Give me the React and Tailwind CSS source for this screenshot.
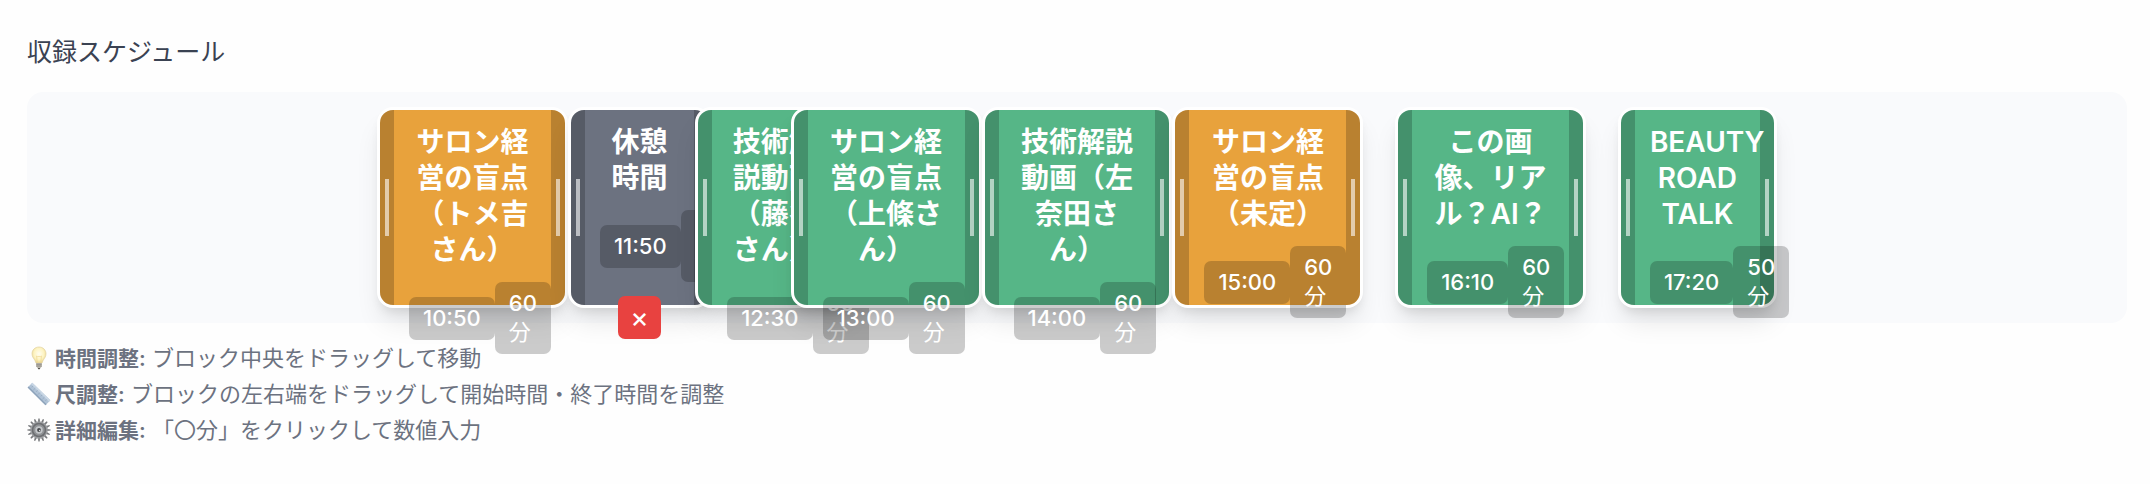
const DAY_START = 9 * 60;
const DAY_LENGTH = 11 * 60;

const blocks = [
  { title: "サロン経営の盲点（トメ吉さん）", time: "10:50", minutes: 60, color: "bg-[#e8a23c]" },
  { title: "休憩時間", time: "11:50", minutes: 45, color: "bg-[#6c7280]", removable: true },
  { title: "技術解説動画（藤谷さん）", time: "12:30", minutes: 50, color: "bg-[#56b687]" },
  { title: "サロン経営の盲点（上條さん）", time: "13:00", minutes: 60, color: "bg-[#56b687]" },
  { title: "技術解説動画（左奈田さん）", time: "14:00", minutes: 60, color: "bg-[#56b687]" },
  { title: "サロン経営の盲点（未定）", time: "15:00", minutes: 60, color: "bg-[#e8a23c]" },
  { title: "この画像、リアル？AI？", time: "16:10", minutes: 60, color: "bg-[#56b687]" },
  { title: "BEAUTY ROAD TALK", time: "17:20", minutes: 50, color: "bg-[#56b687]" },
];

function percent(minutes) {
  return `${(minutes / DAY_LENGTH) * 100}%`;
}

function startOffset(time) {
  const [h, m] = time.split(":").map(Number);
  return percent(h * 60 + m - DAY_START);
}

function Handle({ side }) {
  return (
    <span
      className={
        "absolute inset-y-0 flex w-3.5 cursor-ew-resize items-center justify-center bg-black/20 " +
        (side === "left" ? "left-0 rounded-l-[13px]" : "right-0 rounded-r-[13px]")
      }
    >
      <span className="h-[57px] w-1 bg-white/60" />
    </span>
  );
}

function Block({ block }) {
  return (
    <article
      className={
        "absolute inset-y-[15px] rounded-2xl border-3 border-white shadow-[0_18px_27px_-5px_rgba(0,0,0,0.1),0_7px_11px_-4px_rgba(0,0,0,0.1)] " +
        block.color
      }
      style={{ left: startOffset(block.time), width: percent(block.minutes) }}
    >
      <Handle side="left" />
      <Handle side="right" />
      <div className="relative flex flex-col gap-3.5 px-[29px] pt-3.5 text-white">
        <h3 className="text-center text-[28px] leading-9 font-semibold [text-spacing-trim:space-all]">{block.title}</h3>
        <div className="flex items-center text-[22px] leading-[29px] font-medium">
          <button type="button" className="shrink-0 rounded-[7px] bg-black/20 px-3.5 py-[7px]">
            {block.time}
          </button>
          <button type="button" className="w-14 shrink-0 rounded-[7px] bg-black/20 px-3.5 py-[7px] text-left">
            {block.minutes}
            <span className="font-normal">分</span>
          </button>
        </div>
        {block.removable && (
          <button
            type="button"
            aria-label="削除"
            className="flex size-[43px] items-center justify-center self-center rounded-[7px] bg-[#e84240] text-[28px] leading-[29px] font-normal"
          >
            ×
          </button>
        )}
      </div>
    </article>
  );
}

function BulbIcon() {
  return (
    <svg viewBox="0 0 24 24" className="size-6 shrink-0" aria-hidden="true">
      <defs>
        <radialGradient id="bulb" cx="50%" cy="42%" r="60%">
          <stop offset="0" stopColor="#fffdf0" />
          <stop offset="0.6" stopColor="#fdf3c0" />
          <stop offset="1" stopColor="#e6d08a" />
        </radialGradient>
      </defs>
      <path d="M12 1C7.9 1 5 4 5 7.800c0 3 1.700 4.600 2.800 6.400.7 1.200.8 2.300 1.400 3h5.600c.6-.7.7-1.800 1.400-3C17.300 12.400 19 10.800 19 7.800 19 4 16.100 1 12 1z" fill="url(#bulb)" stroke="#e3d3a0" strokeWidth=".7" />
      <path d="M10.300 16.500 9.500 10l1.500 1 1-1 1 1 1.500-1-.8 6.500" fill="none" stroke="#ecd48a" strokeWidth=".6" />
      <path d="M9.200 17h5.600v3.500l-1.300 1.500h-3l-1.300-1.500z" fill="#b9b6ad" />
      <path d="M9.200 18.300h5.600M9.200 20h5.600" stroke="#87837b" strokeWidth=".7" />
      <path d="M10.700 22h2.600l-.6 1.200h-1.400z" fill="#55514b" />
    </svg>
  );
}

function RulerIcon() {
  return (
    <svg viewBox="0 0 24 24" className="size-6 shrink-0" aria-hidden="true">
      <path d="M5.300.8 23.400 18.300 18.500 23.300.6 5.400z" fill="#afc2d6" />
      <path d="M5.300.8 23.400 18.300 22 19.700 4 2.100z" fill="#c9d7e5" />
      <path d="M.6 5.400 18.500 23.300l1-1L1.600 4.400z" fill="#8ea3ba" />
      <path d="m6 3.900-1.400 1.400M8.300 6.100 6.200 8.200M10.600 8.400 9.200 9.800M12.900 10.600l-2.100 2.100M15.200 12.900l-1.400 1.400M17.500 15.100l-2.100 2.100M19.800 17.400l-1.400 1.400" stroke="#8c9fb5" strokeWidth=".6" />
    </svg>
  );
}

const teeth = Array.from({ length: 16 }, (_, i) => i * 22.5);

function GearIcon() {
  return (
    <svg viewBox="0 0 24 24" className="size-6 shrink-0" aria-hidden="true">
      {teeth.map((angle) => (
        <path key={angle} d="M10.900 4 11.400.4h1.200L13.100 4z" fill="#77797c" transform={`rotate(${angle} 12 12)`} />
      ))}
      <circle cx="12" cy="12" r="8.800" fill="#9b9da0" />
      <circle cx="12" cy="12" r="7.300" fill="#6c6e71" />
      <circle cx="12" cy="12" r="5.700" fill="#909396" />
      <circle cx="12" cy="12" r="3.700" fill="#c4c7ca" />
      <circle cx="12" cy="12" r="1.900" fill="#45474a" />
      <circle cx="12.600" cy="12.500" r=".7" fill="#d9dbdd" />
    </svg>
  );
}

const hints = [
  { Icon: BulbIcon, label: "時間調整:", text: "ブロック中央をドラッグして移動" },
  { Icon: RulerIcon, label: "尺調整:", text: "ブロックの左右端をドラッグして開始時間・終了時間を調整" },
  { Icon: GearIcon, label: "詳細編集:", text: "「〇分」をクリックして数値入力" },
];

export default function App() {
  return (
    <main
      lang="ja"
      className="min-h-screen bg-[#fefefe] pt-[34px] pr-[23px] pb-9 pl-[27px] font-['Inter','Noto_Sans_CJK_JP',sans-serif]"
    >
      <h2 className="text-[25px] leading-9 text-[#3a4252]">収録スケジュール</h2>
      <section aria-label="収録スケジュール" className="relative mt-[22px] h-[231px] rounded-2xl bg-[#f9fafc]">
        {blocks.map((block) => (
          <Block key={block.time} block={block} />
        ))}
      </section>
      <ul className="mt-[17px] text-[22px] leading-9 text-[#6c7280]">
        {hints.map(({ Icon, label, text }) => (
          <li key={label} className="flex h-9 items-center">
            <Icon />
            <p className="ml-1">
              <strong className="text-[21px] font-semibold">{label}</strong> {text}
            </p>
          </li>
        ))}
      </ul>
    </main>
  );
}
